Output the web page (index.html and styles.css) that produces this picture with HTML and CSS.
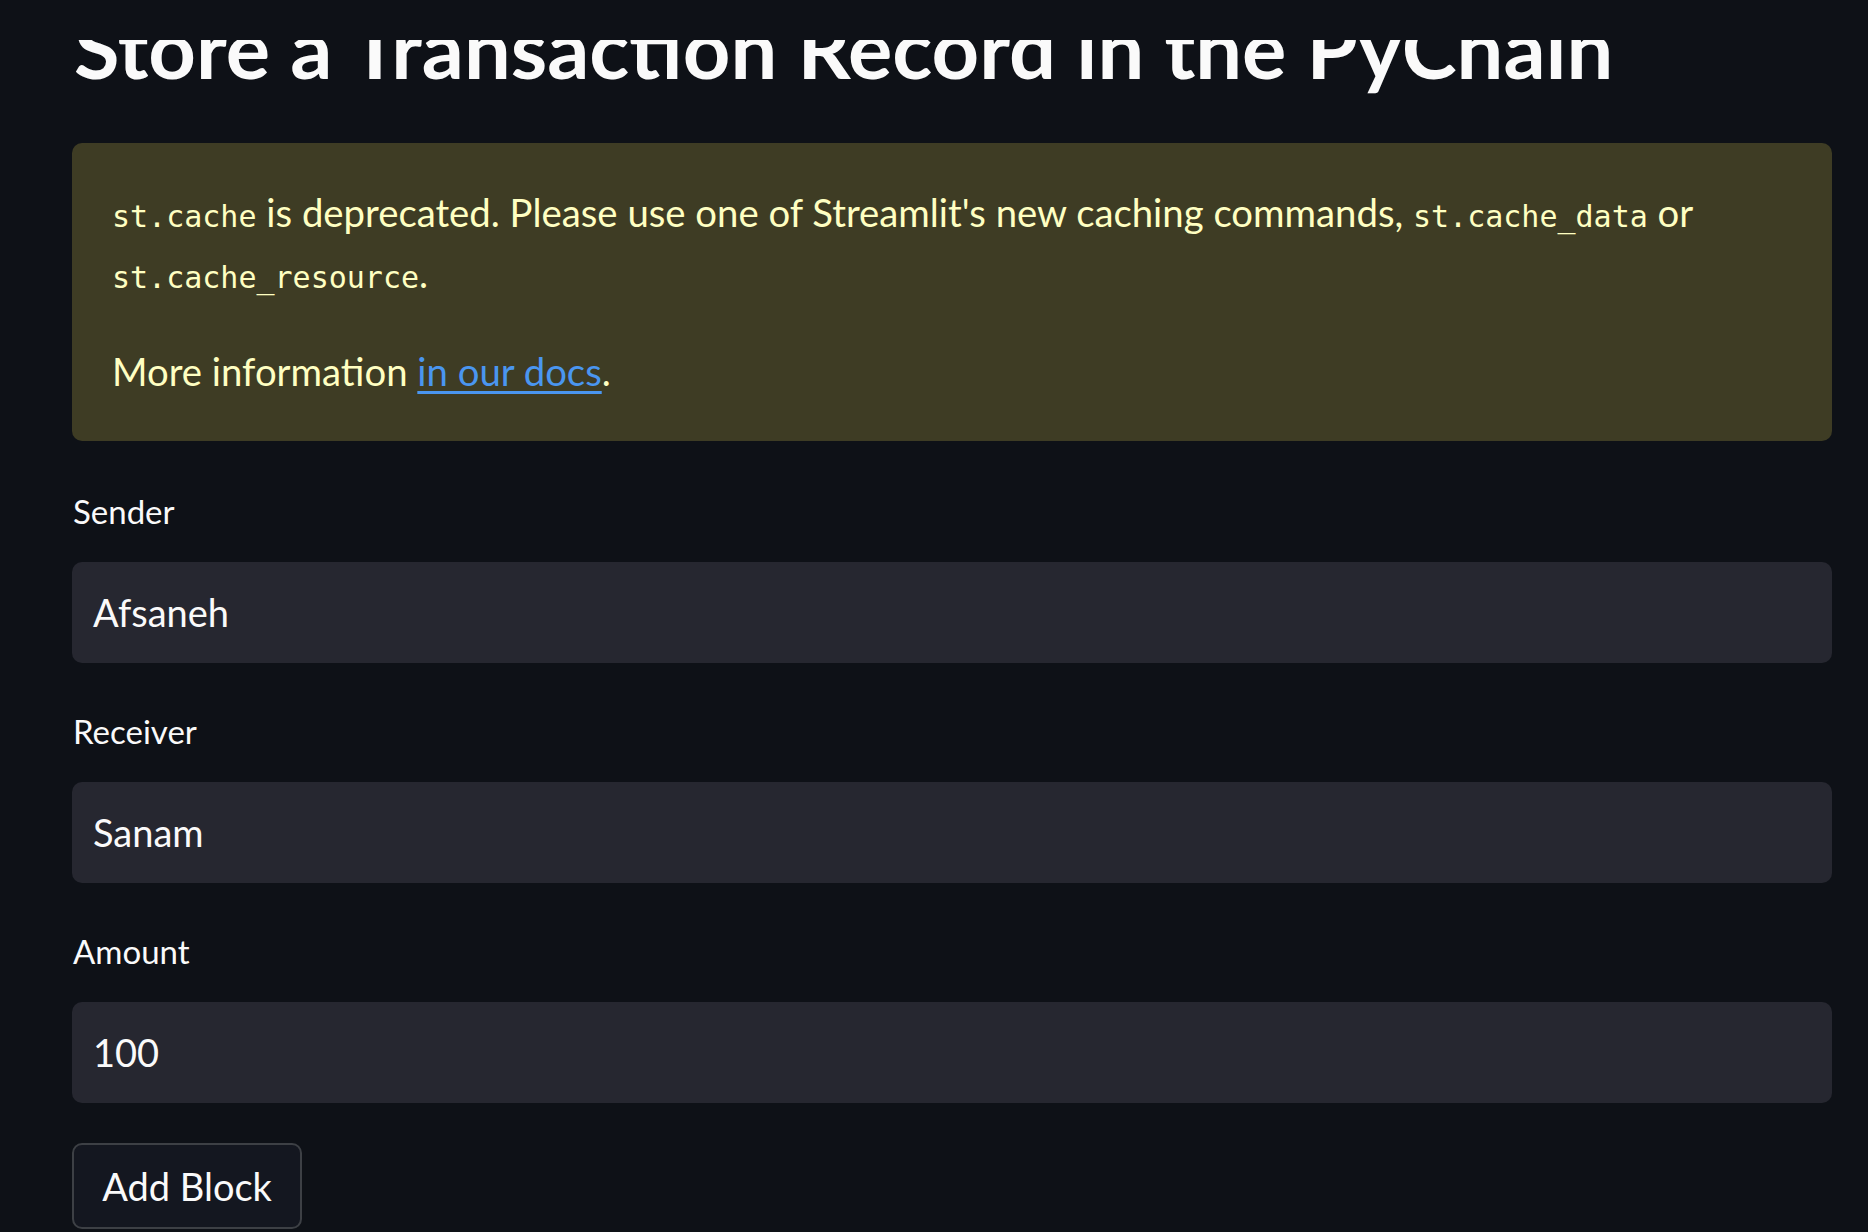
FILE: index.html
```html
<!DOCTYPE html>
<html lang="en">
<head>
<meta charset="utf-8">
<title>PyChain</title>
<link rel="stylesheet" href="styles.css">
</head>
<body>
<header class="app-header"></header>
<main class="main">
  <h1 class="title">Store a Transaction Record in the PyChain</h1>
  <div class="alert">
    <p class="alert-p"><code class="mono">st.cache</code> is deprecated. Please use one of Streamlit's new caching commands, <code class="mono">st.cache_data</code> or <code class="mono">st.cache_resource</code>.</p>
    <p class="alert-p">More information <a class="link" href="#">in our docs</a>.</p>
  </div>
  <div class="field">
    <label class="label">Sender</label>
    <div class="input"><span class="input-text">Afsaneh</span></div>
  </div>
  <div class="field">
    <label class="label">Receiver</label>
    <div class="input"><span class="input-text">Sanam</span></div>
  </div>
  <div class="field">
    <label class="label">Amount</label>
    <div class="input"><span class="input-text">100</span></div>
  </div>
  <button class="btn">Add Block</button>
</main>
</body>
</html>
```

FILE: styles.css
```css
html, body {
  margin: 0;
  padding: 0;
  background: #0e1117;
  color: #fafafa;
  font-family: "Lato", "Noto Sans", sans-serif;
  overflow: hidden;
}

.app-header {
  position: fixed;
  top: 0;
  left: 0;
  right: 0;
  height: 40px;
  background: #0e1117;
  z-index: 10;
}

.main {
  padding: 0 36px 0 72px;
  display: flex;
  flex-direction: column;
  align-items: stretch;
}

.title {
  margin: -2px 0 45px 2px;
  font-size: 83px;
  line-height: 1.2;
  font-weight: 700;
  color: #fafafa;
  white-space: nowrap;
}

.alert {
  background: #3e3c24;
  border-radius: 10px;
  padding: 39px 40px 39px 40px;
  color: #ffffc2;
}

.alert-p {
  margin: 0;
  font-size: 38.3px;
  line-height: 61px;
}

.alert-p + .alert-p {
  margin-top: 37px;
}

.mono {
  font-family: "DejaVu Sans Mono", "Liberation Mono", monospace;
  font-size: 30px;
  line-height: 1;
}

.link {
  color: #4a96f0;
  text-decoration: underline;
  text-underline-offset: 5px;
  text-decoration-thickness: 3px;
}

.field {
  display: flex;
  flex-direction: column;
  margin-top: 42px;
}

.alert + .field {
  margin-top: 44px;
}

.label {
  font-size: 33px;
  line-height: 52px;
  margin-bottom: 25px;
  margin-left: 1px;
}

.input {
  height: 101px;
  background: #262730;
  border-radius: 10px;
  display: flex;
  align-items: center;
  padding-left: 21px;
}

.input-text {
  font-size: 38px;
  color: #fafafa;
}

.btn {
  align-self: flex-start;
  margin-top: 40px;
  width: 230px;
  height: 86px;
  background: #141720;
  border: 2px solid #3d4045;
  border-radius: 10px;
  color: #fafafa;
  font-family: "Lato", "Noto Sans", sans-serif;
  font-size: 38px;
  padding: 0;
}
```
